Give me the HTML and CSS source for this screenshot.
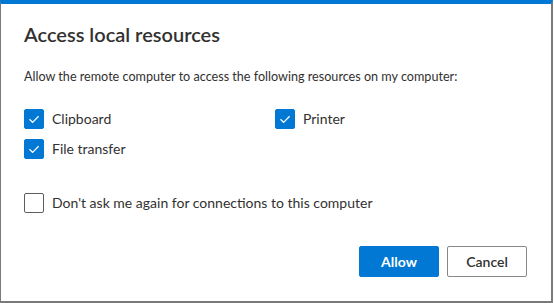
FILE: index.html
```html
<!DOCTYPE html>
<html lang="en">
<head>
    <meta charset="UTF-8">
    <meta name="viewport" content="width=device-width, initial-scale=1.0">
    <title>Access local resources</title>
    <link rel="stylesheet" href="styles.css">
</head>
<body>
    <div class="dialog">
        <h1 class="title">Access local resources</h1>
        <p class="intro">Allow the remote computer to access the following resources on my computer:</p>

        <div class="resources">
            <label class="check">
                <span class="box checked">
                    <svg width="20" height="20" viewBox="0 0 20 20"><path d="M5.5 10.3 L8.6 13.4 L14.6 7.3" fill="none" stroke="#fff" stroke-width="1.3"/></svg>
                </span>
                Clipboard
            </label>
            <label class="check">
                <span class="box checked">
                    <svg width="20" height="20" viewBox="0 0 20 20"><path d="M5.5 10.3 L8.6 13.4 L14.6 7.3" fill="none" stroke="#fff" stroke-width="1.3"/></svg>
                </span>
                Printer
            </label>
            <label class="check">
                <span class="box checked">
                    <svg width="20" height="20" viewBox="0 0 20 20"><path d="M5.5 10.3 L8.6 13.4 L14.6 7.3" fill="none" stroke="#fff" stroke-width="1.3"/></svg>
                </span>
                File transfer
            </label>
        </div>

        <label class="check dont-ask">
            <span class="box"></span>
            Don't ask me again for connections to this computer
        </label>

        <div class="actions">
            <button class="btn primary">Allow</button>
            <button class="btn">Cancel</button>
        </div>
    </div>
</body>
</html>
```

FILE: styles.css
```css
:root {
    --accent: #0078d4;
    --text: #323130;
    --frame: #7a7a7a;
}

* {
    margin: 0;
    padding: 0;
    box-sizing: border-box;
}

body {
    width: 554px;
    height: 303px;
    background: #fff;
    font-family: 'Lato', 'Open Sans', sans-serif;
    color: var(--text);
}

.dialog {
    width: 553px;
    height: 303px;
    display: flex;
    flex-direction: column;
    padding: 16px 24px 24px 23px;
    border-top: 4px solid var(--accent);
    border-left: 1px solid var(--frame);
    border-right: 2px solid var(--frame);
    border-bottom: 2px solid var(--frame);
    background: #fff;
}

.title {
    font-size: 20px;
    line-height: 28px;
    font-weight: 600;
}

.intro {
    margin-top: 19px;
    font-size: 12.6px;
    line-height: 20px;
}

.resources {
    margin-top: 22px;
    display: grid;
    grid-template-columns: 251px 1fr;
    row-gap: 10px;
}

.check {
    display: flex;
    align-items: center;
    gap: 8px;
    font-size: 14px;
    line-height: 20px;
}

.box {
    width: 20px;
    height: 20px;
    flex: none;
    border: 1px solid #605e5c;
    border-radius: 2px;
    background: #fff;
}

.box svg {
    display: block;
    margin: -1px;
}

.box.checked {
    background: var(--accent);
    border-color: var(--accent);
}

.dont-ask {
    margin-top: 34px;
}

.actions {
    margin-top: auto;
    display: flex;
    justify-content: flex-end;
    gap: 8px;
}

.btn {
    min-width: 80px;
    height: 31px;
    padding: 0 16px;
    border: 1px solid #8a8886;
    border-radius: 2px;
    background: #fff;
    color: var(--text);
    font-family: inherit;
    font-size: 14px;
    font-weight: 600;
}

.btn.primary {
    background: var(--accent);
    border-color: var(--accent);
    color: #fff;
    font-weight: 700;
}
```
